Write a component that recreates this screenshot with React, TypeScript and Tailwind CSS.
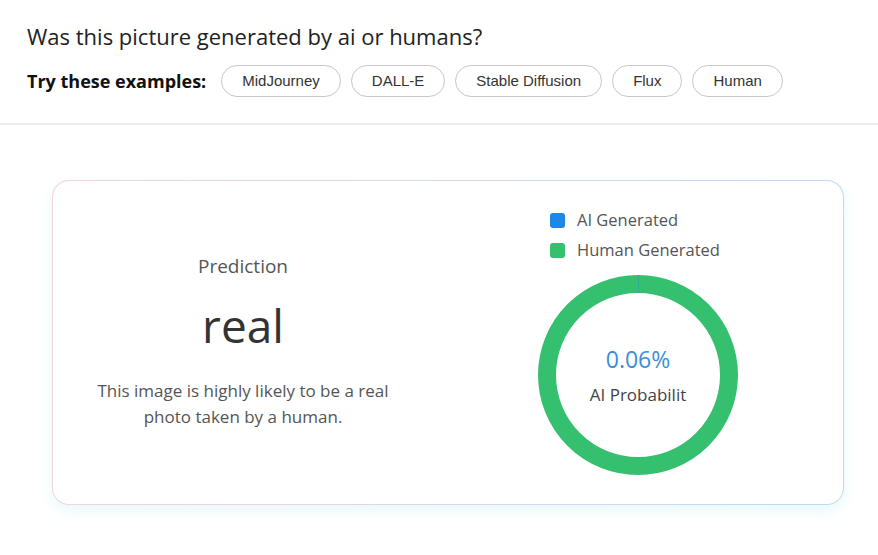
import React from 'react';

const examples = ['MidJourney', 'DALL-E', 'Stable Diffusion', 'Flux', 'Human'];

const Donut: React.FC<{ ai: number }> = ({ ai }) => {
  const r = 91;
  const c = 2 * Math.PI * r;
  const aiLen = (ai / 100) * c;
  return (
    <div className="relative w-[200px] h-[200px]">
      <svg width="200" height="200" viewBox="0 0 200 200" className="-rotate-90">
        <circle cx="100" cy="100" r={r} fill="none" stroke="#35c06f" strokeWidth="18" />
        <circle
          cx="100"
          cy="100"
          r={r}
          fill="none"
          stroke="#1e88e5"
          strokeWidth="18"
          strokeDasharray={`${aiLen} ${c}`}
        />
      </svg>
      <div className="absolute inset-0 flex flex-col items-center pt-[70px]">
        <span className="text-[23px] leading-7 text-[#3a8fd6]">{ai}%</span>
        <span className="text-[17px] leading-5 text-[#444] mt-[12px]">AI Probabilit</span>
      </div>
    </div>
  );
};

const App: React.FC = () => {
  return (
    <div className="w-[878px] h-[555px] bg-white font-['Open_Sans',sans-serif] overflow-hidden">
      {/* Header */}
      <div className="px-[27px] pt-[22px] pb-[26px] border-b-2 border-[#ececec]">
        <h1 className="text-[22px] leading-7 text-[#222]">Was this picture generated by ai or humans?</h1>
        <div className="flex items-center mt-[15px]">
          <span className="text-[18px] font-bold text-[#111] mr-[15px]">Try these examples:</span>
          <div className="flex gap-[10px]">
            {examples.map((e) => (
              <button
                key={e}
                className="h-[32px] px-[20px] rounded-full border border-[#c8c8c8] bg-white text-[15px] text-[#333] font-['Liberation_Sans',Arial,sans-serif]"
              >
                {e}
              </button>
            ))}
          </div>
        </div>
      </div>

      {/* Result card */}
      <div className="px-[52px] pt-[55px]">
        <div className="w-[792px] rounded-[17px] p-px bg-gradient-to-r from-[#f3d3da] via-[#d9d9ec] to-[#bcdcef] shadow-[0_6px_14px_rgba(190,235,245,0.35)]">
          <div className="flex rounded-[16px] bg-white h-[323px]">
            <div className="w-[380px] flex flex-col items-center pt-[73px]">
              <span className="text-[19px] leading-6 text-[#555]">Prediction</span>
              <span className="text-[46px] leading-[56px] text-[#333] mt-[19px]">real</span>
              <p className="text-[17px] leading-[26px] text-[#555] text-center w-[330px] mt-[25px]">
                This image is highly likely to be a real photo taken by a human.
              </p>
            </div>
            <div className="flex-1 flex flex-col items-center pt-[29px]">
              <div className="flex flex-col gap-[10px] mr-[6px]">
                <div className="flex items-center gap-[12px]">
                  <span className="w-[15px] h-[15px] rounded-[3px] bg-[#1e88e5]" />
                  <span className="text-[16.5px] leading-5 text-[#555]">AI Generated</span>
                </div>
                <div className="flex items-center gap-[12px]">
                  <span className="w-[15px] h-[15px] rounded-[3px] bg-[#35c06f]" />
                  <span className="text-[16.5px] leading-5 text-[#555]">Human Generated</span>
                </div>
              </div>
              <div className="mt-[15px]">
                <Donut ai={0.06} />
              </div>
            </div>
          </div>
        </div>
      </div>
    </div>
  );
};

export default App;
